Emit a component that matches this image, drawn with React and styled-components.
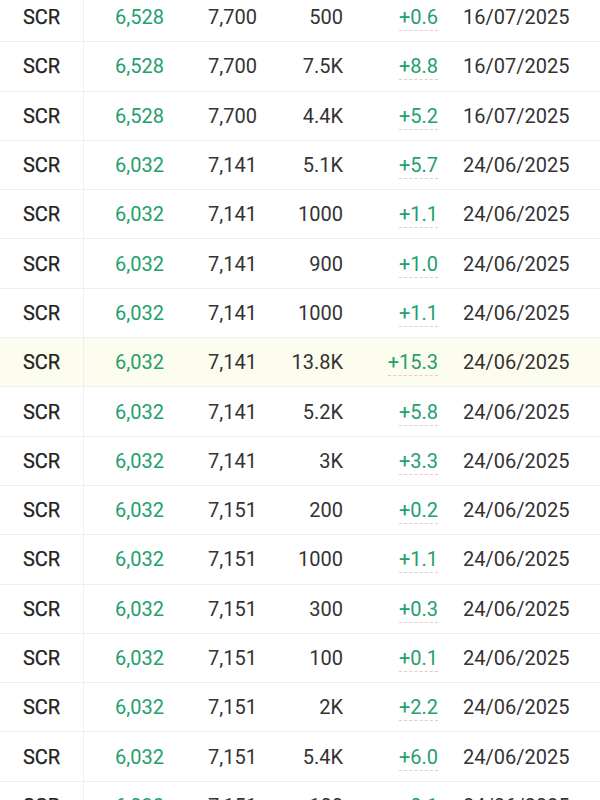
import styled, { createGlobalStyle } from 'styled-components';

const GlobalStyle = createGlobalStyle`
  html, body {
    margin: 0;
    padding: 0;
    background: #fff;
    overflow: hidden;
  }
  body {
    font-family: Roboto, "Noto Sans", Arial, sans-serif;
  }
`;

const rows = [
  ['6,528', '7,700', '500', '+0.6', '16/07/2025'],
  ['6,528', '7,700', '7.5K', '+8.8', '16/07/2025'],
  ['6,528', '7,700', '4.4K', '+5.2', '16/07/2025'],
  ['6,032', '7,141', '5.1K', '+5.7', '24/06/2025'],
  ['6,032', '7,141', '1000', '+1.1', '24/06/2025'],
  ['6,032', '7,141', '900', '+1.0', '24/06/2025'],
  ['6,032', '7,141', '1000', '+1.1', '24/06/2025'],
  ['6,032', '7,141', '13.8K', '+15.3', '24/06/2025', true],
  ['6,032', '7,141', '5.2K', '+5.8', '24/06/2025'],
  ['6,032', '7,141', '3K', '+3.3', '24/06/2025'],
  ['6,032', '7,151', '200', '+0.2', '24/06/2025'],
  ['6,032', '7,151', '1000', '+1.1', '24/06/2025'],
  ['6,032', '7,151', '300', '+0.3', '24/06/2025'],
  ['6,032', '7,151', '100', '+0.1', '24/06/2025'],
  ['6,032', '7,151', '2K', '+2.2', '24/06/2025'],
  ['6,032', '7,151', '5.4K', '+6.0', '24/06/2025'],
  ['6,032', '7,151', '100', '+0.1', '24/06/2025'],
];

export default function App() {
  return (
    <>
      <GlobalStyle />
      <Table>
        {rows.map(([price, target, qty, change, date, hot], i) => (
          <Row key={i} $highlight={hot}>
            <Symbol>SCR</Symbol>
            <Cell $green>{price}</Cell>
            <Cell>{target}</Cell>
            <Cell>{qty}</Cell>
            <Cell $green>
              <Change>{change}</Change>
            </Cell>
            <DateCell>{date}</DateCell>
          </Row>
        ))}
      </Table>
    </>
  );
}

const Table = styled.div`
  display: flex;
  flex-direction: column;
  width: 600px;
  margin-top: -7px;
`;

const Row = styled.div`
  display: grid;
  grid-template-columns: 84px 80px 93px 86px 95px 1fr;
  height: 49.3px;
  box-sizing: border-box;
  border-bottom: 1px solid #efefef;
  background: ${(p) => (p.$highlight ? '#fdfdef' : '#fff')};
  font-size: 20px;
  color: #333;
`;

const Symbol = styled.div`
  display: flex;
  align-items: center;
  justify-content: center;
  border-right: 1px solid #efefef;
  font-weight: 400;
  -webkit-text-stroke: 0.25px #222;
  color: #222;
`;

const Cell = styled.div`
  display: flex;
  align-items: center;
  justify-content: flex-end;
  color: ${(p) => (p.$green ? '#22a06d' : '#333')};
`;

const Change = styled.span`
  display: inline-block;
  line-height: 20px;
  padding-bottom: 3px;
  margin-top: 4px;
  border-bottom: 1px dashed #e6c9c9;
`;

const DateCell = styled.div`
  display: flex;
  align-items: center;
  padding-left: 25px;
  color: #333;
`;
